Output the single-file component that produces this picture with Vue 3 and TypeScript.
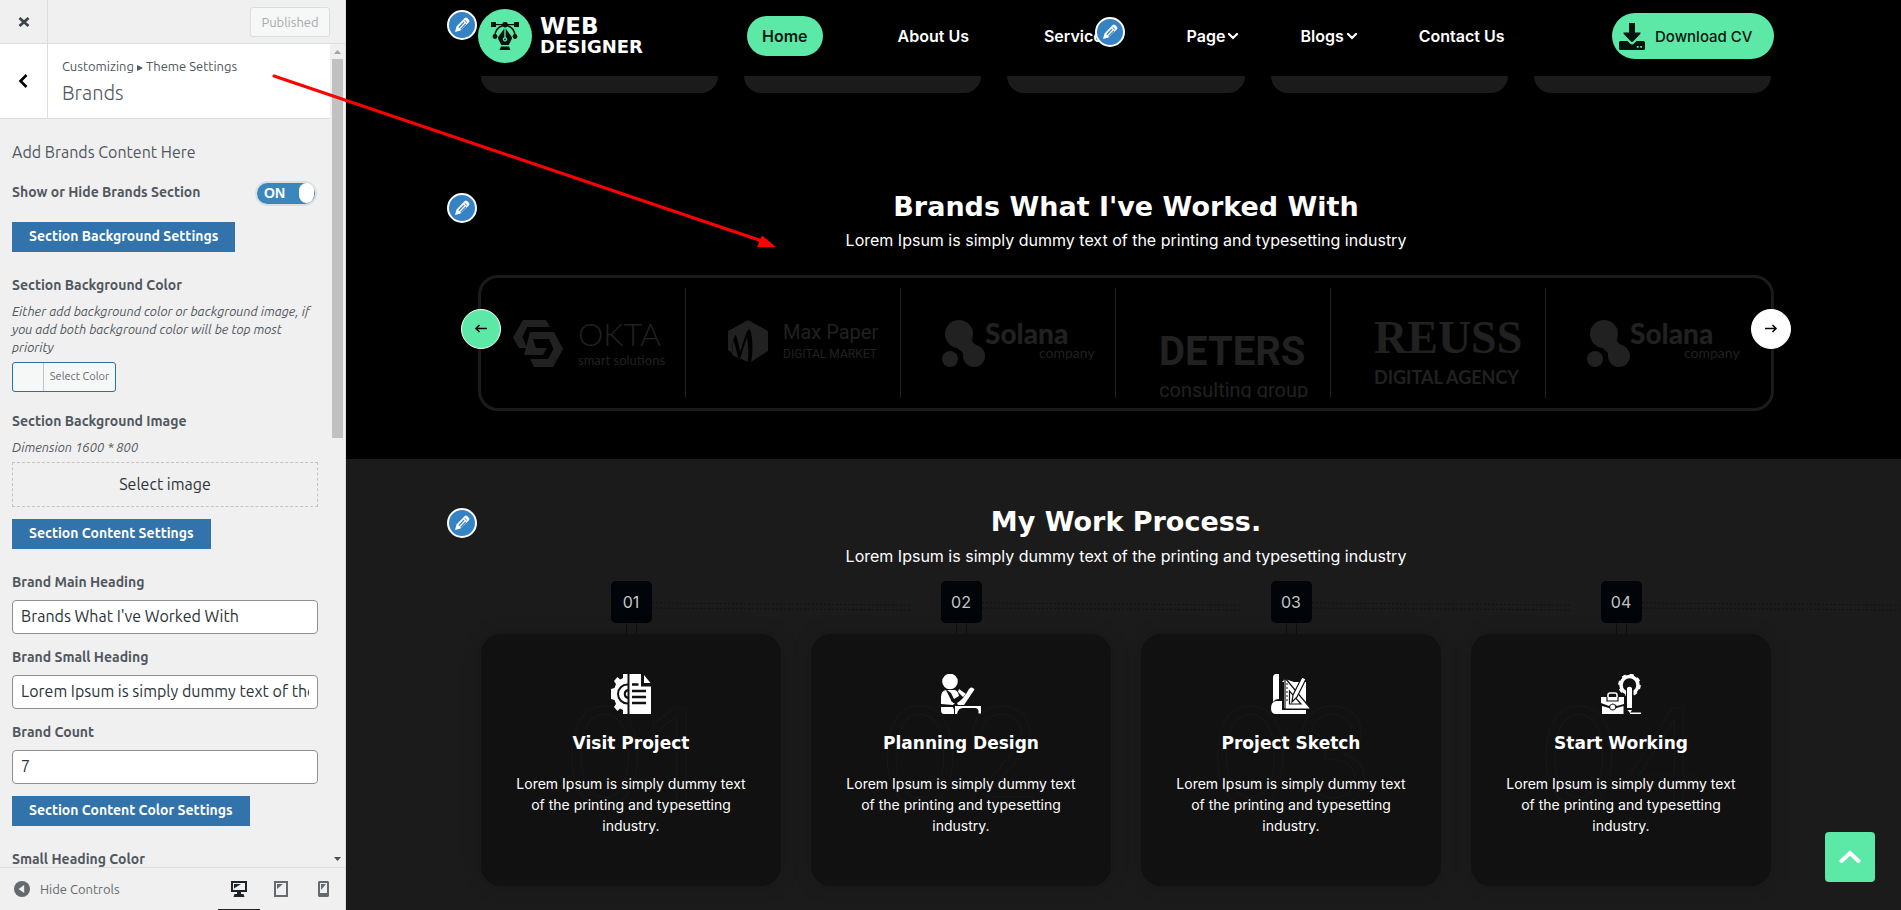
<script setup lang="ts">
import { ref } from 'vue'

interface NavItem { label: string; active?: boolean; menu?: boolean; edit?: boolean }
interface Step { num: string; title: string }

const nav: NavItem[] = [
  { label: 'Home', active: true },
  { label: 'About Us' },
  { label: 'Services', edit: true },
  { label: 'Page', menu: true },
  { label: 'Blogs', menu: true },
  { label: 'Contact Us' },
]
const steps: Step[] = [
  { num: '01', title: 'Visit Project' },
  { num: '02', title: 'Planning Design' },
  { num: '03', title: 'Project Sketch' },
  { num: '04', title: 'Start Working' },
]
const brands: string[] = ['okta', 'max', 'solana', 'deters', 'reuss', 'solana']
const intro = 'Lorem Ipsum is simply dummy text of the printing and typesetting industry'

const visible = ref(true)
const mainHeading = ref("Brands What I've Worked With")
const smallHeading = ref(intro)
const count = ref('7')
const pencil = 'M3 17 4.500 11.500 11.800 4 12.800 3Q14 2 15.200 3L17 5Q18 6 17 7.200L8.500 15.500ZM6.300 12.200 7.300 13 12.500 7.600 11.600 6.700ZM8.200 13.900 9 14.700 14.300 9.300 13.400 8.400ZM12.400 5.600 14.600 7.800 15.200 7.200 13 5Z'
</script>

<template>
  <div class="app">
    <aside class="sidebar">
      <header class="topbar">
        <button class="close" aria-label="Close">
          <svg width="12" height="12" viewBox="0 0 12 12"><path d="M1.5 2 10.5 10M10.5 2 1.5 10" stroke="#3c434a" stroke-width="2.8" /></svg>
        </button>
        <button class="published" disabled>Published</button>
      </header>

      <div class="scroll">
        <div class="panel">
          <div class="panel-head">
            <button class="back" aria-label="Back">
              <svg width="10" height="14" viewBox="0 0 10 14"><path d="M8.5 1 2.5 7 8.5 13" fill="none" stroke="#000" stroke-width="2.6" /></svg>
            </button>
            <div class="titles">
              <p class="crumb">Customizing <span class="tri"></span> Theme Settings</p>
              <h1>Brands</h1>
            </div>
          </div>
          <div class="controls">
            <h2>Add Brands Content Here</h2>
            <div class="toggle-row">
              <label class="label" for="show">Show or Hide Brands Section</label>
              <label class="switch">
                <input id="show" v-model="visible" type="checkbox" />
                <span class="on">{{ visible ? 'ON' : 'OFF' }}</span><span class="knob"></span>
              </label>
            </div>
            <button class="section-btn">Section Background Settings</button>
            <span class="label first">Section Background Color</span>
            <p class="desc">Either add background color or background image, if you add both background color will be top most priority</p>
            <button class="color-btn"><span class="swatch"></span><span class="color-text">Select Color</span></button>
            <span class="label image-label">Section Background Image</span>
            <p class="desc">Dimension 1600 * 800</p>
            <button class="select-image">Select image</button>
            <button class="section-btn tight">Section Content Settings</button>
            <label class="label first" for="main">Brand Main Heading</label>
            <input id="main" v-model="mainHeading" class="field" type="text" />
            <label class="label" for="small">Brand Small Heading</label>
            <input id="small" v-model="smallHeading" class="field" type="text" />
            <label class="label" for="count">Brand Count</label>
            <input id="count" v-model="count" class="field" type="text" />
            <button class="section-btn tight">Section Content Color Settings</button>
            <span class="label first">Small Heading Color</span>
          </div>
        </div>
        <div class="bar">
          <svg width="15" height="15" viewBox="0 0 15 15"><path d="M4 10 7.5 6 11 10Z" fill="#a3a3a3" /></svg>
          <div class="thumb"></div>
          <svg width="15" height="15" viewBox="0 0 15 15"><path d="M4 5 11 5 7.5 9Z" fill="#505050" /></svg>
        </div>
      </div>

      <footer class="foot">
        <button class="hide">
          <svg width="16" height="16" viewBox="0 0 16 16"><circle cx="8" cy="8" r="8" fill="#656a6f" /><path d="M10.2 4 10.2 12 4.6 8Z" fill="#f0f0f0" /></svg>
          Hide Controls
        </button>
        <div class="devices">
          <button class="device active" aria-label="Desktop">
            <svg width="16" height="16" viewBox="0 0 16 16"><path fill="#1d2327" fill-rule="evenodd" d="M0 0H16V11H10V13H12.500L13.500 16H2.500L3.500 13H6V11H0ZM2 2V9H14V2Z" /><path d="M3 3H10L3 7.500Z" fill="#1d2327" /></svg>
          </button>
          <button class="device" aria-label="Tablet">
            <svg width="14" height="16" viewBox="0 0 14 16"><path fill="#656a6f" fill-rule="evenodd" d="M0 0H14V16H0ZM2 2V14H12V2Z" /><path d="M3 3H9L3 8Z" fill="#656a6f" /></svg>
          </button>
          <button class="device" aria-label="Mobile">
            <svg width="11" height="16" viewBox="0 0 11 16"><path fill="#656a6f" fill-rule="evenodd" d="M1 0H10L11 1V15L10 16H1L0 15V1ZM2 2V12H9V2Z" /><path d="M3 3H8L3 9Z" fill="#656a6f" /></svg>
          </button>
        </div>
      </footer>
    </aside>

    <main class="preview">
      <header class="site-head">
        <div class="wrap head-row">
          <a class="logo" href="#">
            <span class="logo-mark">
              <svg width="28" height="28" viewBox="0 0 28 28" fill="#04130c">
                <rect x="0" y="0" width="5" height="5" /><rect x="23" y="0" width="5" height="5" /><path d="M4 2H24V3.200H4Z" />
                <circle cx="14" cy="2.600" r="2.800" /><path d="M12 3.500C6 5.500 4 9 4 14M16 3.500C22 5.500 24 9 24 14" fill="none" stroke="#04130c" stroke-width="1.600" />
                <circle cx="4" cy="14.500" r="2.400" /><circle cx="24" cy="14.500" r="2.400" />
                <path fill-rule="evenodd" d="M13.300 6.500 7.500 14.500Q6.500 16.500 8 18.500L10.300 23H17.700L20 18.500Q21.500 16.500 20.500 14.500L14.700 6.500V15.200A2.200 2.200 0 1 1 13.300 15.200Z" />
                <circle cx="14" cy="17.300" r="0.900" /><path d="M10 24.500H18L19.500 28H8.500Z" />
              </svg>
            </span>
            <span class="logo-text"><b class="web">WEB</b><b class="designer">DESIGNER</b></span>
          </a>
          <nav class="nav">
            <span v-for="item in nav" :key="item.label" class="nav-cell">
              <a href="#" :class="['nav-link', { active: item.active }]">{{ item.label }}<svg v-if="item.menu" class="chev" width="10" height="7" viewBox="0 0 10 7"><path d="M1 1 5 5 9 1" fill="none" stroke="#fff" stroke-width="2.200" stroke-linecap="round" /></svg></a>
              <button v-if="item.edit" class="edit edit-nav" aria-label="Edit menu"><svg width="20" height="20" viewBox="0 0 20 20"><path :d="pencil" /></svg></button>
            </span>
          </nav>
          <a class="cv" href="#">
            <svg width="26" height="27" viewBox="0 0 26 27" fill="#04130c"><path d="M10 0H16V9.500H21.500Q22 10.300 21 11.300L14 18.500Q13 19.400 12 18.500L5 11.300Q4 10.300 4.500 9.500H10Z" /><path fill-rule="evenodd" d="M1.500 18H8.500L11.200 20.700Q13 22.200 14.800 20.700L17.500 18H24.500Q26 18 26 19.500V25.500Q26 27 24.500 27H1.500Q0 27 0 25.500V19.500Q0 18 1.500 18ZM17.800 23V24.800H19.600V23ZM21.200 23V24.800H23V23Z" /></svg>
            Download CV
          </a>
          <button class="edit edit-logo" aria-label="Edit logo"><svg width="20" height="20" viewBox="0 0 20 20"><path :d="pencil" /></svg></button>
        </div>
      </header>

      <div class="wrap peek"><span v-for="n in 5" :key="n"></span></div>

      <section class="brands">
        <div class="wrap">
          <h2>Brands What I've Worked With</h2>
          <p class="sub">{{ intro }}</p>
          <div class="carousel">
            <div v-for="(b, i) in brands" :key="i" class="brand">
              <svg v-if="b === 'okta'" width="215" height="110" viewBox="0 0 215 110">
                <path d="M42 32H65L69 39H46L41.500 49L46 60H38L32 49.500ZM49 44H73L82 61L72 79H53L49 71H67L72.500 61L68 51H52L55 60H66L62 67H43Z" />
                <text x="97" y="58" class="lato light s32">OKTA</text><text x="97" y="77" class="lato s13">smart solutions</text>
              </svg>
              <svg v-else-if="b === 'max'" width="215" height="110" viewBox="0 0 215 110">
                <path d="M52 32 72 43V63L55 74Q58 60 55 44Q53 38 50 46L44 64Q43 56 40 47Q37 47 36 65L32 62V43Z" /><path d="M36 67Q37 53 38 53L42 69 44 71 51 49Q53 60 52 74Z" />
                <text x="87" y="51" class="roboto s20">Max Paper</text><text x="87" y="70" class="roboto s12">DIGITAL MARKET</text>
              </svg>
              <svg v-else-if="b === 'solana'" width="215" height="110" viewBox="0 0 215 110">
                <circle cx="48" cy="46" r="14" /><circle cx="63" cy="68" r="11" /><circle cx="39" cy="71" r="8" /><path d="M42 58 60 50Q61 56 68 58L54 72Q53 62 42 58Z" />
                <text x="74" y="56" class="lato heavy s28">Solana</text><text x="128" y="70" class="lato s14">company</text>
              </svg>
              <svg v-else-if="b === 'deters'" width="215" height="110" viewBox="0 0 215 110">
                <text x="33" y="77" class="narrow">DETERS</text><text x="33" y="109" class="narrow-sub">consulting group</text>
              </svg>
              <svg v-else width="215" height="110" viewBox="0 0 215 110">
                <text x="33" y="65" class="serif">REUSS</text><text x="33" y="96" class="lato bold s18">DIGITAL AGENCY</text>
              </svg>
            </div>
            <button class="arrow prev" aria-label="Previous"><svg width="14" height="12" viewBox="0 0 14 12"><path d="M13 5.500H2M5.500 2 2 5.500 5.500 9" /></svg></button>
            <button class="arrow next" aria-label="Next"><svg width="14" height="12" viewBox="0 0 14 12"><path d="M1 5.500H12M8.500 2 12 5.500 8.500 9" /></svg></button>
          </div>
          <button class="edit edit-section" aria-label="Edit brands"><svg width="20" height="20" viewBox="0 0 20 20"><path :d="pencil" /></svg></button>
        </div>
      </section>

      <section class="process">
        <div class="wrap">
          <h2>My Work Process.</h2>
          <p class="sub">{{ intro }}</p>
          <div class="steps">
            <article v-for="(s, i) in steps" :key="s.num" class="step">
              <span class="num">{{ s.num }}</span>
              <svg class="dashes" width="258" height="12" viewBox="0 0 258 12"><path d="M0 2 258 4M0 7 258 9" /></svg>
              <div class="stem"></div>
              <div class="card">
                <span class="ghost" aria-hidden="true">{{ s.num }}</span>
                <svg v-if="i === 0" class="icon" width="40" height="40" viewBox="0 0 40 40">
                  <path d="M18.500 0H30V12.500H40V40H18.500ZM33 1 39.500 9H33Z" />
                  <path class="cut" d="M21 10.500H27.500M21 17H35M21 23H35M21 29H35" />
                  <path d="M16.500 0H12V4L9 5.500L6.500 3L3 7L5 10L3.500 14L0 15V25L3.500 26L5 30L3 33L6.500 37L9 34.500L12 36V40H16.500V30.500A10.500 10.500 0 0 1 16.500 9.500Z" />
                  <path d="M16.500 11.500A8.500 8.500 0 0 0 16.500 28.500V25A5.200 5.200 0 0 1 16.500 15ZM16.500 17.500A2.700 2.700 0 0 0 16.500 22.500Z" />
                </svg>
                <svg v-else-if="i === 1" class="icon" width="40" height="40" viewBox="0 0 40 40">
                  <circle cx="9" cy="7.500" r="7.800" />
                  <path d="M0 30V23Q0 17 5 16L8 22 11 28 14 29 12 31ZM0 33H12L13 36V40H3Q0 40 0 36ZM6 16H14Q17 17 18 22L13 25 10 19Z" />
                  <path d="M10 26 13 29 23 21 20 18" fill="none" stroke="#111" stroke-width="1" /><path d="M18 15 25 20 22 23 17 18Z" />
                  <path d="M28 15Q31 12 33.500 15.500L23 31H17L16 29Q22 26 28 15Z" />
                  <path d="M14 32H40V39.500H37.500V37Q37 34 34 34H22Q17 34 16 40H14Z" />
                </svg>
                <svg v-else-if="i === 2" class="icon" width="40" height="40" viewBox="0 0 40 40">
                  <path d="M2 4Q2 0 5 0H8V25Q4 25 2 28ZM10 8H13V34H35V8H23L14 5 11 8Z" /><path d="M5 27H11V36H35V40H5Q0 40 0 34Q0 28 5 27Z" />
                  <path fill-rule="evenodd" stroke="#111" stroke-width="1.200" d="M14 4 40 35H14ZM18.500 17V30H30Z" />
                  <path d="M20 22V29H27Z" />
                  <path d="M15 10H17M15 14H17M15 18H17M15 22H17M15 26H17" stroke="#111" />
                  <path d="M31 3 35 5 26 23 21 28 22 21Z" stroke="#111" stroke-width="1.200" />
                </svg>
                <svg v-else class="icon" width="40" height="40" viewBox="0 0 40 40">
                  <circle cx="28.500" cy="11" r="8.500" fill="none" stroke="#fff" stroke-width="3.500" />
                  <circle cx="28.500" cy="11" r="10.200" fill="none" stroke="#fff" stroke-width="2.200" stroke-dasharray="4 4" />
                  <path d="M25 14H32.500V37L28 40L25 36Z" fill="#111" /><path d="M26 14Q28.500 11.500 31 14V34H26ZM26.500 36H31L29 39Z" />
                  <path d="M29 38.500H40V40H29Z" /><path d="M0 23H23V30L16 32Q11.500 27 8 32L0 29ZM1 32 8 34Q11.500 39 15.500 34L22.500 32V40H1Z" />
                  <circle cx="11.700" cy="33" r="2.500" /><path d="M6 27V22Q6 19 9 19H14Q17 19 17 22V27Z" fill="#fff" stroke="#111" stroke-width="1.200" /><path d="M7 23V21Q7 19 9 19H14Q16 19 16 21V23" fill="#111" stroke="#fff" stroke-width="1.500" />
                </svg>
                <h3>{{ s.title }}</h3>
                <p>Lorem Ipsum is simply dummy text of the printing and typesetting industry.</p>
              </div>
            </article>
          </div>
          <button class="edit edit-section" aria-label="Edit process"><svg width="20" height="20" viewBox="0 0 20 20"><path :d="pencil" /></svg></button>
        </div>
      </section>
      <a class="to-top" href="#" aria-label="Back to top"><svg width="22" height="14" viewBox="0 0 22 14"><path d="M2.500 11 11 3 19.500 11" /></svg></a>
    </main>

    <svg class="pointer" width="800" height="260" viewBox="0 0 800 260"><path d="M274 76 762 241" stroke="#f00" stroke-width="3" stroke-linecap="round" /><path d="M776 247 762 235.500 757 247Z" fill="#f00" /></svg>
  </div>
</template>

<style>
body { margin: 0; background: #000; }
</style>

<style scoped>
* { box-sizing: border-box; }
h1, h2, h3, p { margin: 0; }
button { font: inherit; border: 0; background: none; padding: 0; cursor: pointer; }
a { text-decoration: none; color: inherit; }
svg { display: block; flex: none; }
.app { position: relative; display: grid; grid-template-columns: 346px minmax(0, 1fr); height: 100vh; overflow: hidden; }

.sidebar { display: flex; flex-direction: column; min-height: 0; background: #f0f0f0; border-right: 1px solid #ddd; color: #50575e; font-family: Ubuntu, "Open Sans", sans-serif; font-size: 13px; }
.topbar { flex: none; display: flex; align-items: stretch; justify-content: space-between; height: 44px; padding-right: 15px; border-bottom: 1px solid #ddd; }
.close, .back { display: flex; align-items: center; justify-content: center; width: 48px; border-right: 1px solid #ddd; }
.back { padding-right: 2px; }
.published { align-self: center; width: 80px; height: 30px; border: 1px solid #dcdcde; border-radius: 3px; background: #f6f7f7; color: #a7aaad; font-size: 13px; }
.scroll { flex: 1; display: flex; min-height: 0; overflow: hidden; }
.panel { flex: 1; min-width: 0; }
.panel-head { display: flex; height: 75px; background: #fff; border-bottom: 1px solid #ddd; }
.titles { padding: 12px 0 0 14px; }
.crumb { font-size: 13px; line-height: 20px; }
.tri { display: inline-block; border-left: 6px solid #50575e; border-top: 3px solid transparent; border-bottom: 3px solid transparent; }
h1 { font-size: 20px; line-height: 34px; font-weight: 200; }
.controls { padding: 0 12px; }
.controls h2 { margin-top: 21px; font-size: 16px; line-height: 24px; font-weight: 400; }
.toggle-row { display: flex; align-items: center; justify-content: space-between; height: 24px; margin-top: 17px; }
.controls .label { display: block; margin-top: 13px; font-size: 14px; line-height: 20px; font-weight: 600; }
.controls .first { margin-top: 23px; }
.controls .image-label { margin-top: 19px; }
.controls .toggle-row .label { margin: 0 0 2px; }
.switch { position: relative; display: flex; align-items: center; justify-content: space-between; width: 62px; height: 25px; margin-right: 1px; padding: 0 1px 0 7px; border: 2px solid #dcdfe1; border-radius: 13px; background: #3a87be; }
.switch input { position: absolute; opacity: 0; width: 1px; height: 1px; margin: 0; }
.on { color: #fff; font-family: "Liberation Sans", sans-serif; font-size: 14px; font-weight: 700; line-height: 20px; }
.knob { width: 15px; height: 20px; border-radius: 8px; background: #fff; }
.section-btn { display: block; height: 30px; margin-top: 17px; padding: 0 17px 2px; background: #3173aa; color: #fff; font-size: 14px; font-weight: 600; }
.section-btn.tight { margin-top: 12px; }
.desc { margin-top: 7px; font-size: 13px; line-height: 18px; font-style: italic; }
.color-btn { display: flex; align-items: stretch; width: 104px; height: 30px; margin-top: 6px; border: 1px solid #2271b1; border-radius: 3px; background: #f6f7f7; color: #656a6f; font-size: 11px; }
.swatch { width: 31px; border-right: 1px solid #c3c4c7; }
.color-text { flex: 1; line-height: 26px; text-align: center; }
.select-image { display: block; width: 100%; height: 45px; margin-top: 6px; padding-bottom: 2px; border: 1px dashed #c3c4c7; color: #2c3338; font-size: 16px; }
.field { display: block; width: 100%; height: 34px; margin-top: 8px; padding: 0 8px 2px; border: 1px solid #8c8f94; border-radius: 4px; background: #fff; color: #2c3338; font-family: inherit; font-size: 16px; font-weight: 400; }
.bar { flex: none; display: flex; flex-direction: column; width: 15px; }
.bar svg:last-child { margin-top: auto; }
.thumb { width: 11px; height: 46%; margin-left: 2px; background: #c1c1c1; }
.foot { flex: none; display: flex; justify-content: space-between; height: 43px; padding: 0 1px 0 14px; border-top: 1px solid #ddd; }
.hide { display: flex; align-items: center; gap: 10px; color: #656a6f; }
.devices { display: flex; }
.device { display: flex; align-items: center; justify-content: center; width: 42px; }
.device.active { border-bottom: 1px solid #1d2327; }

.preview { position: relative; min-width: 0; overflow: hidden; background: #000; color: #fff; font-family: Inter, sans-serif; font-size: 16px; }
.wrap { position: relative; width: 1296px; max-width: 100%; margin: 0 auto; }
.site-head, .brands, .process { padding-left: 5px; }
.head-row { display: flex; align-items: center; height: 76px; padding-bottom: 4px; }
.logo { display: flex; align-items: center; gap: 8px; width: 269px; }
.logo-mark { display: flex; align-items: center; justify-content: center; width: 54px; height: 54px; border-radius: 50%; background: #5ce9a7; }
.logo-text { display: flex; flex-direction: column; font-family: "DejaVu Sans", sans-serif; }
.web { font-size: 23px; line-height: 22px; }
.designer { font-size: 18px; line-height: 20px; }
.nav { display: flex; align-items: center; gap: 75px; font-weight: 600; }
.nav-cell { position: relative; }
.nav-link { display: flex; align-items: center; height: 40px; white-space: nowrap; }
.nav-link.active { padding: 0 15px; border-radius: 20px; background: #5ce9a7; color: #0a1a12; }
.chev { margin-left: 3px; margin-right: -13px; }
.cv { display: flex; align-items: center; gap: 10px; width: 162px; height: 46px; margin-left: auto; padding-left: 7px; border-radius: 23px; background: #5ce9a7; color: #04130c; font-size: 15px; font-weight: 500; white-space: nowrap; }
.edit { position: absolute; display: flex; align-items: center; justify-content: center; width: 30px; height: 30px; border: 2px solid #fff; border-radius: 50%; background: #3582c4; }
.edit path { fill: #fff; fill-rule: evenodd; }
.edit-logo { left: -31px; top: 10px; }
.edit-nav { left: 51px; top: 1px; }
.edit-section { left: -31px; top: 4px; }
.peek { display: grid; grid-template-columns: repeat(5, 1fr); gap: 26px; width: 1295px; padding: 0 0 0 5px; }
.peek span { height: 17px; background: #1b1b1b; border-radius: 0 0 20px 20px; }
.brands { padding-top: 96px; padding-bottom: 48px; }
.brands h2, .process h2 { font-family: "DejaVu Sans", sans-serif; font-size: 27px; line-height: 36px; font-weight: 700; text-align: center; }
.sub { margin-top: 3px; line-height: 24px; text-align: center; }
.carousel { position: relative; display: grid; grid-template-columns: repeat(6, 1fr); margin-top: 23px; padding: 10px 0; border: 3px solid #1b1b1b; border-radius: 20px; }
.brand { position: relative; height: 110px; overflow: hidden; fill: #212121; }
.brand:not(:nth-child(6))::after { content: ""; position: absolute; top: 0; bottom: 0; right: 10px; width: 1px; background: #212121; }
.lato { font-family: Lato, sans-serif; }
.light { font-weight: 300; }
.bold { font-weight: 700; }
.heavy { font-weight: 900; }
.roboto { font-family: Roboto, sans-serif; }
.s12 { font-size: 12px; }
.s13 { font-size: 13px; }
.s14 { font-size: 14px; }
.s18 { font-size: 18px; }
.s20 { font-size: 20px; }
.s28 { font-size: 28px; }
.s32 { font-size: 32px; }
.narrow { font-family: Roboto, sans-serif; font-size: 40px; font-weight: 700; }
.narrow-sub { font-family: Roboto, sans-serif; font-size: 20px; }
.serif { font-family: "Liberation Serif", serif; font-size: 46px; font-weight: 700; }
.arrow { position: absolute; top: 31px; display: flex; align-items: center; justify-content: center; width: 40px; height: 40px; border: 1px solid #fff; border-radius: 50%; background: #fff; }
.arrow path { fill: none; stroke: #0a0a0a; stroke-width: 1.6; }
.prev { left: -20px; background: #5ce9a7; }
.next { right: -20px; }
.process { min-height: 500px; padding-top: 45px; background: #1b1b1b; }
.process .sub { margin-top: 4px; }
.steps { display: grid; grid-template-columns: repeat(4, 1fr); gap: 30px; margin-top: 13px; padding: 0 3px; }
.step { position: relative; display: flex; flex-direction: column; align-items: center; }
.num { display: flex; align-items: center; justify-content: center; width: 41px; height: 42px; border-radius: 5px; background: #010409; color: #c4c6c8; }
.dashes { position: absolute; left: 171px; top: 20px; fill: none; stroke: #111; stroke-width: 1; stroke-dasharray: 2 2; }
.stem { width: 11px; height: 11px; border-left: 1px solid #0d0d0d; border-right: 1px solid #0d0d0d; }
.card { position: relative; width: 100%; padding: 40px 30px 50px; border-radius: 20px; background: #111; box-shadow: 0 0 20px rgba(0, 0, 0, 0.15); text-align: center; }
.card > * { position: relative; }
.card .ghost { position: absolute; left: 0; right: 0; top: 42px; height: 130px; font-size: 134px; line-height: 160px; font-weight: 300; color: transparent; -webkit-text-stroke: 1px #181818; }
.icon { margin: 0 auto; fill: #fff; }
.cut { stroke: #111; stroke-width: 2.6; }
.card h3 { margin-top: 17px; font-family: "DejaVu Sans", sans-serif; font-size: 17px; line-height: 24px; }
.card p { margin-top: 18px; font-size: 14px; line-height: 21px; }
.to-top { position: absolute; right: 26px; bottom: 28px; display: flex; align-items: center; justify-content: center; width: 50px; height: 50px; border-radius: 4px; background: #5ce9a7; }
.to-top path { fill: none; stroke: #fff; stroke-width: 4; stroke-linecap: round; }
.pointer { position: absolute; left: 0; top: 0; pointer-events: none; }
</style>
